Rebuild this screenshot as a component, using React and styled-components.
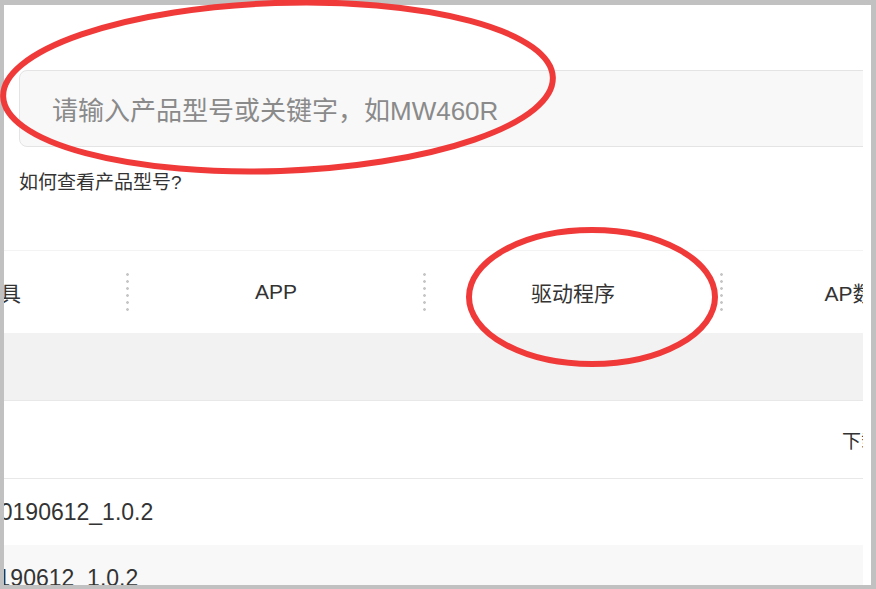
import styled, { createGlobalStyle } from "styled-components";

const GlobalStyle = createGlobalStyle`
  html, body {
    margin: 0;
    padding: 0;
    background: #fff;
  }
  * {
    box-sizing: border-box;
  }
`;

const Page = styled.div`
  position: relative;
  width: 876px;
  height: 589px;
  overflow: hidden;
  font-family: "Liberation Sans", "Noto Sans CJK SC", sans-serif;
  color: #333;
`;

const Frame = styled.div`
  width: 100%;
  height: 100%;
  border-style: solid;
  border-color: #c1c1c1;
  border-width: 5px 5px 4px 4px;
  padding-right: 8px;
  background: #fff;
`;

const Clip = styled.div`
  height: 100%;
  overflow: hidden;
  display: flex;
  flex-direction: column;
`;

const SearchBox = styled.div`
  margin: 65px -20px 0 15px;
  height: 77px;
  flex: none;
  display: flex;
  align-items: center;
  padding-left: 32px;
  background: #f8f8f8;
  border: 1px solid #e4e4e4;
  border-radius: 8px;
  font-size: 26px;
  color: #8a8a8a;
  white-space: nowrap;
`;

const HelpLink = styled.div`
  margin: 24px 0 0 15px;
  line-height: 24px;
  font-size: 19px;
  color: #333;
  flex: none;
`;

const TabBar = styled.div`
  margin-top: 55px;
  margin-left: -172px;
  height: 83px;
  flex: none;
  display: flex;
  align-items: center;
  border-top: 1px solid #f3f3f3;
`;

const Tab = styled.div`
  width: 294px;
  flex: none;
  text-align: center;
  font-size: 21px;
  color: #333;
  white-space: nowrap;
`;

const Divider = styled.div`
  width: 3px;
  height: 42px;
  flex: none;
  background-image: radial-gradient(circle, #c6c6c6 1.1px, transparent 1.6px);
  background-size: 3px 7px;
  background-position: 0 0;
`;

const Band = styled.div`
  height: 68px;
  flex: none;
  background: #f2f2f2;
  border-bottom: 1px solid #e8e8e8;
`;

const ActionRow = styled.div`
  height: 78px;
  flex: none;
  display: grid;
  grid-template-columns: 838px auto;
  align-items: center;
  border-bottom: 1px solid #e8e8e8;
  font-size: 19px;
  white-space: nowrap;
`;

const FileRow = styled.div`
  height: ${(p) => p.$h}px;
  flex: none;
  display: flex;
  align-items: center;
  background: ${(p) => (p.$alt ? "#f8f8f8" : "#fff")};
`;

const FileName = styled.span`
  margin-left: ${(p) => p.$shift}px;
  font-size: 23px;
  color: #333;
  white-space: nowrap;
`;

const Marks = styled.svg`
  position: absolute;
  inset: 0;
  pointer-events: none;
`;

export default function App() {
  return (
    <Page>
      <GlobalStyle />
      <Frame>
        <Clip>
          <SearchBox>请输入产品型号或关键字，如MW460R</SearchBox>
          <HelpLink>如何查看产品型号?</HelpLink>
          <TabBar>
            <Tab>升级工具</Tab>
            <Divider />
            <Tab>APP</Tab>
            <Divider />
            <Tab>驱动程序</Tab>
            <Divider />
            <Tab>AP数据表</Tab>
          </TabBar>
          <Band />
          <ActionRow>
            <span />
            <span>下载</span>
          </ActionRow>
          <FileRow $h={66}>
            <FileName $shift={-17}>20190612_1.0.2</FileName>
          </FileRow>
          <FileRow $h={66} $alt>
            <FileName $shift={-32}>20190612_1.0.2</FileName>
          </FileRow>
        </Clip>
      </Frame>
      <Marks width="876" height="589" viewBox="0 0 876 589">
        <ellipse
          cx="278"
          cy="87"
          rx="275"
          ry="84"
          fill="none"
          stroke="#f03a3a"
          strokeWidth="6"
          transform="rotate(-2 278 87)"
        />
        <ellipse
          cx="592"
          cy="297"
          rx="123"
          ry="67"
          fill="none"
          stroke="#f03a3a"
          strokeWidth="6"
        />
      </Marks>
    </Page>
  );
}
